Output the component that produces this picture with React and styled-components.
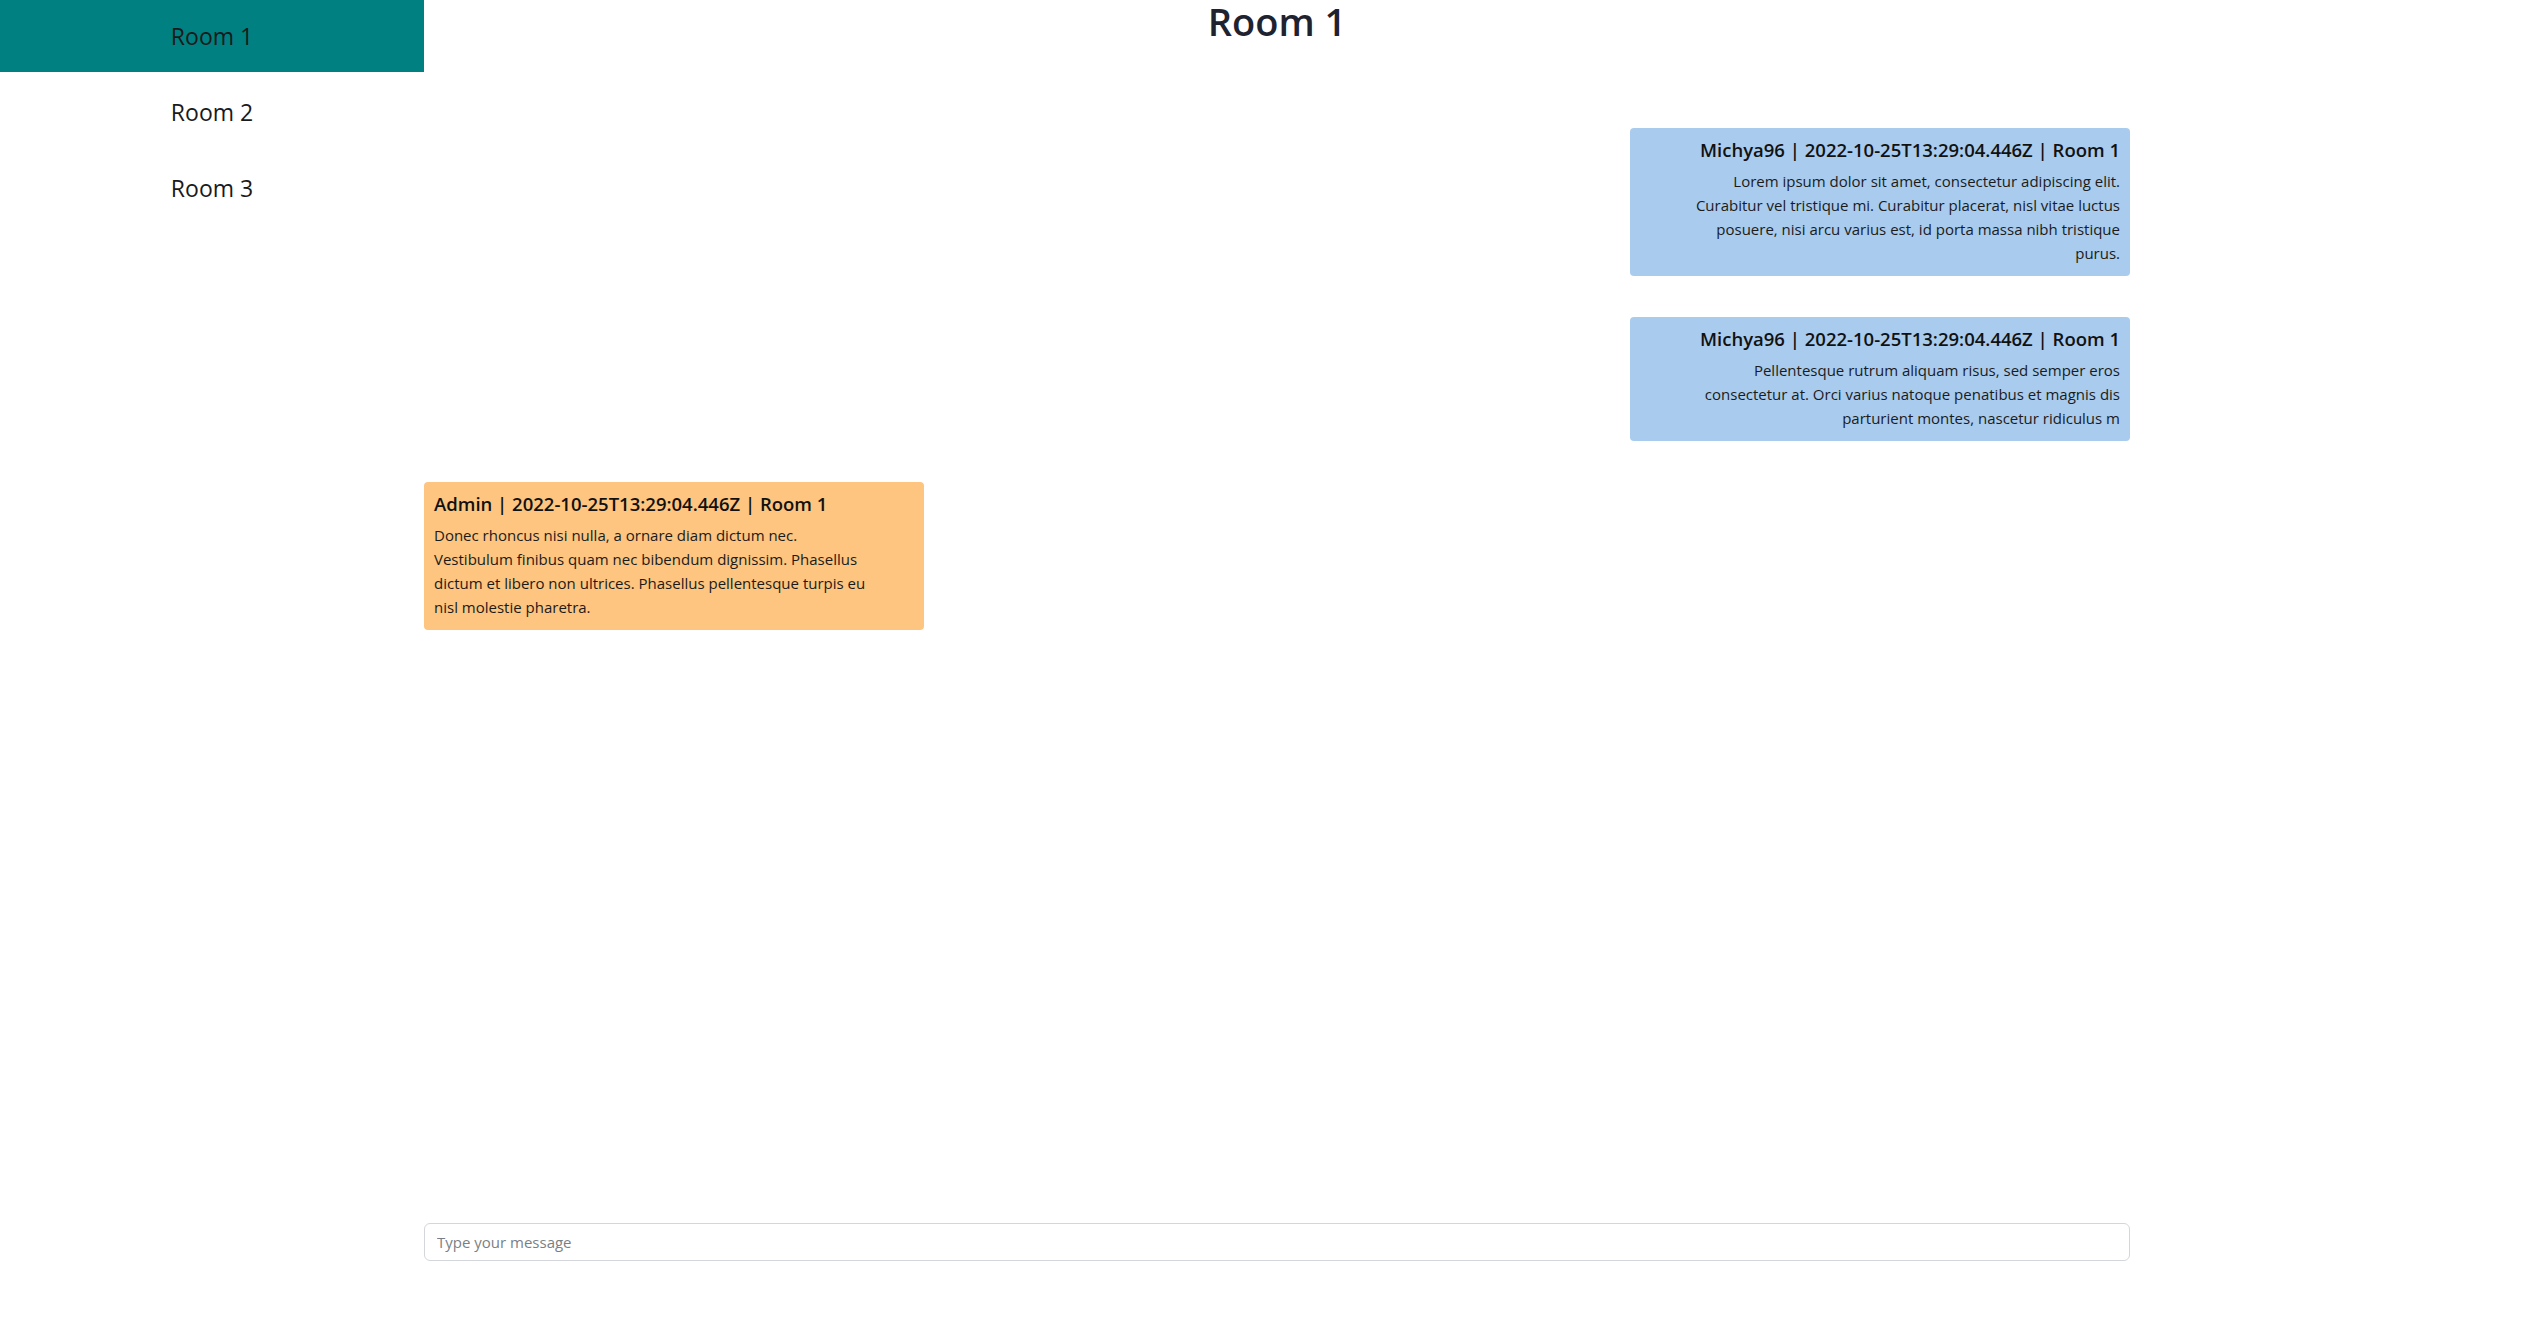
import React from 'react';
import styled, { createGlobalStyle } from 'styled-components';

const GlobalStyle = createGlobalStyle`
  html, body {
    margin: 0;
    padding: 0;
    background: #fff;
  }
  body {
    font-family: "Open Sans", "Noto Sans", sans-serif;
    color: #212529;
  }
  * {
    box-sizing: border-box;
  }
`;

const Page = styled.div`
  display: grid;
  grid-template-columns: 424px 1706px 1fr;
  height: 100vh;
`;

const Sidebar = styled.nav`
  display: flex;
  flex-direction: column;
  gap: 4px;
`;

const RoomItem = styled.div`
  height: 72px;
  display: flex;
  align-items: center;
  justify-content: center;
  font-size: 23px;
  color: #1a1a1a;
  background: ${(p) => (p.$active ? '#008080' : 'transparent')};
  cursor: pointer;
`;

const Main = styled.main`
  display: flex;
  flex-direction: column;
  min-height: 0;
`;

const Title = styled.h1`
  margin: -3px 0 0;
  font-size: 38px;
  font-weight: 600;
  line-height: 48px;
  text-align: center;
  color: #1f2330;
`;

const Messages = styled.div`
  flex: 1;
  display: flex;
  flex-direction: column;
  gap: 41px;
  padding-top: 83px;
  overflow: auto;
`;

const Row = styled.div`
  display: flex;
  justify-content: ${(p) => (p.$mine ? 'flex-end' : 'flex-start')};
`;

const Bubble = styled.div`
  width: 500px;
  padding: 10px 10px 11px;
  border-radius: 4px;
  background: ${(p) => (p.$mine ? '#a8cbee' : '#fdc57f')};
  text-align: ${(p) => (p.$mine ? 'right' : 'left')};
`;

const Meta = styled.h5`
  margin: 0 0 7px;
  font-size: 18.5px;
  font-weight: 600;
  line-height: 24px;
  color: #111;
`;

const Body = styled.p`
  margin: 0;
  margin-left: ${(p) => (p.$mine ? 'auto' : '0')};
  max-width: 437px;
  font-size: 15px;
  line-height: 24px;
  color: #1b1b1b;
`;

const InputBar = styled.div`
  padding: 0 0 68px;
`;

const MessageInput = styled.input`
  width: 100%;
  height: 38px;
  padding: 6px 12px;
  border: 1px solid #d3d6da;
  border-radius: 6px;
  font-family: inherit;
  font-size: 15px;
  color: #212529;
  outline: none;
  &::placeholder {
    color: #7a7f85;
  }
`;

const rooms = ['Room 1', 'Room 2', 'Room 3'];

const messages = [
  {
    mine: true,
    meta: 'Michya96 | 2022-10-25T13:29:04.446Z | Room 1',
    text: 'Lorem ipsum dolor sit amet, consectetur adipiscing elit. Curabitur vel tristique mi. Curabitur placerat, nisl vitae luctus posuere, nisi arcu varius est, id porta massa nibh tristique purus.',
  },
  {
    mine: true,
    meta: 'Michya96 | 2022-10-25T13:29:04.446Z | Room 1',
    text: 'Pellentesque rutrum aliquam risus, sed semper eros consectetur at. Orci varius natoque penatibus et magnis dis parturient montes, nascetur ridiculus m',
  },
  {
    mine: false,
    meta: 'Admin | 2022-10-25T13:29:04.446Z | Room 1',
    text: 'Donec rhoncus nisi nulla, a ornare diam dictum nec. Vestibulum finibus quam nec bibendum dignissim. Phasellus dictum et libero non ultrices. Phasellus pellentesque turpis eu nisl molestie pharetra.',
  },
];

function App() {
  return (
    <>
      <GlobalStyle />
      <Page>
        <Sidebar>
          {rooms.map((room, i) => (
            <RoomItem key={room} $active={i === 0}>
              {room}
            </RoomItem>
          ))}
        </Sidebar>
        <Main>
          <Title>Room 1</Title>
          <Messages>
            {messages.map((m, i) => (
              <Row key={i} $mine={m.mine}>
                <Bubble $mine={m.mine}>
                  <Meta>{m.meta}</Meta>
                  <Body $mine={m.mine}>{m.text}</Body>
                </Bubble>
              </Row>
            ))}
          </Messages>
          <InputBar>
            <MessageInput placeholder="Type your message" />
          </InputBar>
        </Main>
      </Page>
    </>
  );
}

export default App;
